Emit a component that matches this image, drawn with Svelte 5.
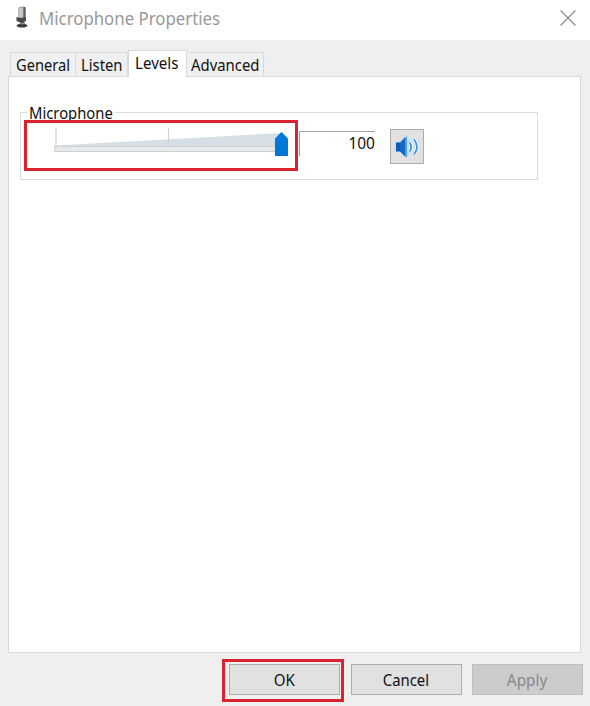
<script>
  const tabs = [
    { label: 'General', width: 66, scale: 0.915 },
    { label: 'Listen', width: 52, scale: 0.925 },
    { label: 'Levels', width: 59, scale: 0.945, active: true },
    { label: 'Advanced', width: 77, scale: 0.93 }
  ];
</script>

<div class="dialog">
  <header>
    <svg class="mic" width="18" height="26" viewBox="0 0 18 26">
      <ellipse cx="9" cy="20.600" rx="5.500" ry="2" fill="#3c3c3c" />
      <path d="M7 15h4.500v5H7z" fill="#555" />
      <path d="M5.500 3 7 2l4-.5 1.500 1V15l-4.500 1-2.500-1z" fill="#777" />
      <path d="M6 3 10.500 2v10.500L6 13z" fill="#c6c6c6" />
      <path d="M10.500 2 12.500 2.500v13l-2-.5z" fill="#606060" />
      <path d="m3.500 12 4 1 5.500-.5v3.500l-5.500 1.500-4-1.500z" fill="#484848" />
      <path d="M7 18.300h4.500" stroke="#999" />
    </svg>
    <h1><span>Microphone Properties</span></h1>
    <svg class="close" width="16" height="16" viewBox="0 0 16 16">
      <path d="m.5.5 15 15m0-15-15 15" fill="none" stroke="#888" stroke-width="1.100" />
    </svg>
  </header>

  <nav>
    {#each tabs as tab}
      <div class="tab" class:active={tab.active} style="width: {tab.width}px">
        <span style="transform: scaleX({tab.scale})">{tab.label}</span>
      </div>
    {/each}
  </nav>

  <main>
    <section class="group">
      <div class="legend"><span>Microphone</span></div>
      <div class="controls">
        <div class="slider">
          <svg width="268" height="45" viewBox="0 0 268 45">
            <path d="M28 22.500 255 10v13.500H28z" fill="#d7dfe6" />
            <path d="M29 5v18M141.500 5v18" stroke="#d0d3d6" stroke-width="1.200" />
            <path d="M27.500 23.500H255v5H27.500z" fill="#e7eaea" stroke="#cdd0d2" />
            <path d="M248 15.500 254.500 9l6.500 6.500V33h-13z" fill="#0078d7" />
          </svg>
        </div>
        <div class="value"><span>100</span></div>
        <div class="speaker">
          <svg width="32" height="33" viewBox="0 0 32 33">
            <path d="M3.500 11.500h4.500l6-6h3.500v4l3 1 3-3c6 3 7 14 0 18l-3-3-3 1v4H14l-6-6H3.500z" fill="#c3def5" />
            <path d="M5 12.500h4v9H5z" fill="#075bb5" />
            <path d="M9 12.500 14.500 7v20L9 21.500z" fill="#1768c4" />
            <path d="M15.200 7v20" stroke="#3c9ae9" stroke-width="1.400" />
            <path d="M18.500 12.500q3.500 4.500 0 9M23 9.500q6 7.500 0 15" fill="none" stroke="#f4faff" stroke-width="4" />
            <path d="M18.500 12.500q3.500 4.500 0 9M23 9.500q6 7.500 0 15" fill="none" stroke="#3f91dc" stroke-width="1.700" />
          </svg>
        </div>
      </div>
    </section>
  </main>

  <footer>
    <div class="mark"><div class="button"><span class="ok">OK</span></div></div>
    <div class="button"><span class="cancel">Cancel</span></div>
    <div class="button disabled"><span class="apply">Apply</span></div>
  </footer>
</div>

<style>
  .dialog {
    width: 590px;
    height: 706px;
    overflow: hidden;
    display: flex;
    flex-direction: column;
    box-sizing: border-box;
    background: #efefef;
    color: #111;
    font: 16px/22px "Noto Sans", "Open Sans", sans-serif;
  }
  .dialog * { box-sizing: border-box; }
  svg { display: block; flex: none; }
  span { display: inline-block; white-space: nowrap; }
  header {
    height: 40px;
    flex: none;
    display: flex;
    align-items: flex-start;
    background: #fff;
    padding-left: 13px;
  }
  .mic { margin-top: 5px; }
  h1 {
    margin: 6px 0 0 8px;
    width: 521px;
    font-size: 17.5px;
    font-weight: 400;
    line-height: 24px;
    color: #999;
  }
  h1 span { transform: scaleX(.96); transform-origin: left; }
  .close { margin-top: 9.5px; }
  nav {
    height: 36px;
    flex: none;
    display: flex;
    align-items: flex-end;
    padding-left: 10px;
  }
  .tab {
    height: 24px;
    border: 1px solid #d9dadb;
    border-bottom: 0;
    border-left-width: 0;
    background: #f0f0f0;
    padding: 1px 0 0 5px;
  }
  .tab:first-child { border-left-width: 1px; padding-left: 4.5px; }
  .tab:last-child { padding-left: 4px; }
  .tab span { transform-origin: left; }
  .tab.active {
    height: 27px;
    margin-bottom: -1px;
    background: #fff;
    border-left-width: 1px;
    padding: 1px 0 0 6px;
    z-index: 1;
  }
  main {
    height: 577px;
    width: 573px;
    flex: none;
    margin-left: 8px;
    padding: 35px 0 0 11px;
    border: 1px solid #d9d9d9;
    background: #fff;
  }
  .group {
    width: 518px;
    height: 68px;
    border: 1px solid #dcdcdc;
  }
  .legend {
    width: 87px;
    height: 8px;
    margin: -1px 0 0 6px;
    padding-left: 2px;
    background: #fff;
    font-size: 15.5px;
    line-height: 20px;
  }
  .legend span { position: relative; top: -9px; transform: scaleX(.955); transform-origin: left; }
  .controls {
    position: relative;
    display: flex;
    align-items: flex-start;
    padding-left: 3px;
  }
  .slider {
    width: 274px;
    height: 51px;
    border: 3px solid #d9232e;
    background: #fff;
  }
  .value {
    width: 76px;
    height: 25px;
    margin: 11px 0 0 1px;
    border-top: 1px solid #a0a0a0;
    border-left: 1px solid #a0a0a0;
    text-align: right;
    font-size: 15.5px;
    line-height: 22px;
  }
  .speaker {
    width: 34px;
    height: 35px;
    margin: 9px 0 0 15px;
    border: 1px solid #adadad;
    background: #e1e1e1;
  }
  footer {
    display: flex;
    align-items: flex-start;
    padding: 6px 0 0 222px;
  }
  .mark {
    width: 122px;
    height: 43px;
    border: 3px solid #d9232e;
    padding: 2px 0 0 4px;
  }
  .button {
    width: 111px;
    height: 31px;
    flex: none;
    border: 1px solid #adadad;
    background: #e1e1e1;
    text-align: center;
    line-height: 30px;
  }
  footer > .button { margin: 5px 0 0 7px; }
  footer > .disabled { margin-left: 10px; background: #ccc; border-color: #bfbfbf; color: #888; }
  .ok { transform: scaleX(.94); }
  .cancel { transform: translateX(-1px) scaleX(.93); }
  .apply { transform: scaleX(.96); }
</style>
